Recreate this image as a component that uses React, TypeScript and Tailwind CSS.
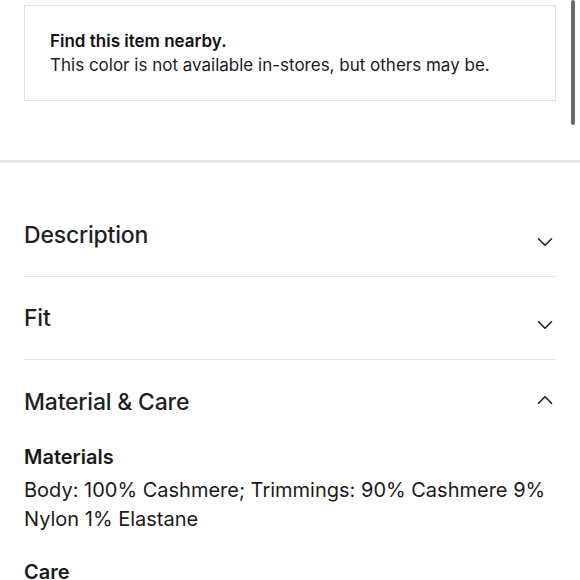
import { ChevronDown, ChevronUp } from 'lucide-react';

const font = { fontFamily: 'Inter, "Noto Sans", sans-serif' };

function Row({ title, open, first }: { title: string; open?: boolean; first?: boolean }) {
  return (
    <div
      className={`flex items-start justify-between ${first ? 'pt-[58px]' : open ? 'pt-[28px]' : 'pt-[27px]'} ${open ? '' : 'pb-[27px] border-b border-[#e3e3e3]'}`}
    >
      <h2 className="text-[23px] leading-[28px] font-medium text-[#1f1f1f] tracking-[-0.2px]">{title}</h2>
      {open ? (
        <ChevronUp className="w-[26px] h-[26px] -mr-[2px] -mt-[1px] -mb-[1px] text-[#222]" strokeWidth={1.5} />
      ) : (
        <ChevronDown className="w-[26px] h-[26px] -mr-[2px] mt-[8px] -mb-[6px] text-[#222]" strokeWidth={1.5} />
      )}
    </div>
  );
}

export default function App() {
  return (
    <div className="relative w-[580px] h-[580px] overflow-hidden bg-white" style={font}>
      <div className="absolute right-[5px] top-0 w-[4px] h-[125px] rounded-full bg-[#6b6b6b]" />

      <div className="pt-[5px] px-6">
        <div className="h-[96px] border border-[#e2e2e2] px-[25px] flex flex-col justify-center">
          <p className="text-[17px] leading-[24px] font-semibold text-[#111]">Find this item nearby.</p>
          <p className="text-[17px] leading-[24px] text-[#1a1a1a]">
            This color is not available in-stores, but others may be.
          </p>
        </div>
      </div>

      <div className="mt-[59px] h-[3px] bg-[#e6e6e6]" />

      <div className="px-6">
        <Row title="Description" first />
        <Row title="Fit" />
        <Row title="Material & Care" open />

        <div className="mt-[27px] text-[#1a1a1a]">
          <h3 className="text-[20px] leading-[29px] font-semibold">Materials</h3>
          <p className="mt-[4px] text-[20px] leading-[29px]">
            Body: 100% Cashmere; Trimmings: 90% Cashmere 9% Nylon 1% Elastane
          </p>
          <h3 className="mt-[24px] text-[20px] leading-[29px] font-semibold">Care</h3>
        </div>
      </div>
    </div>
  );
}
